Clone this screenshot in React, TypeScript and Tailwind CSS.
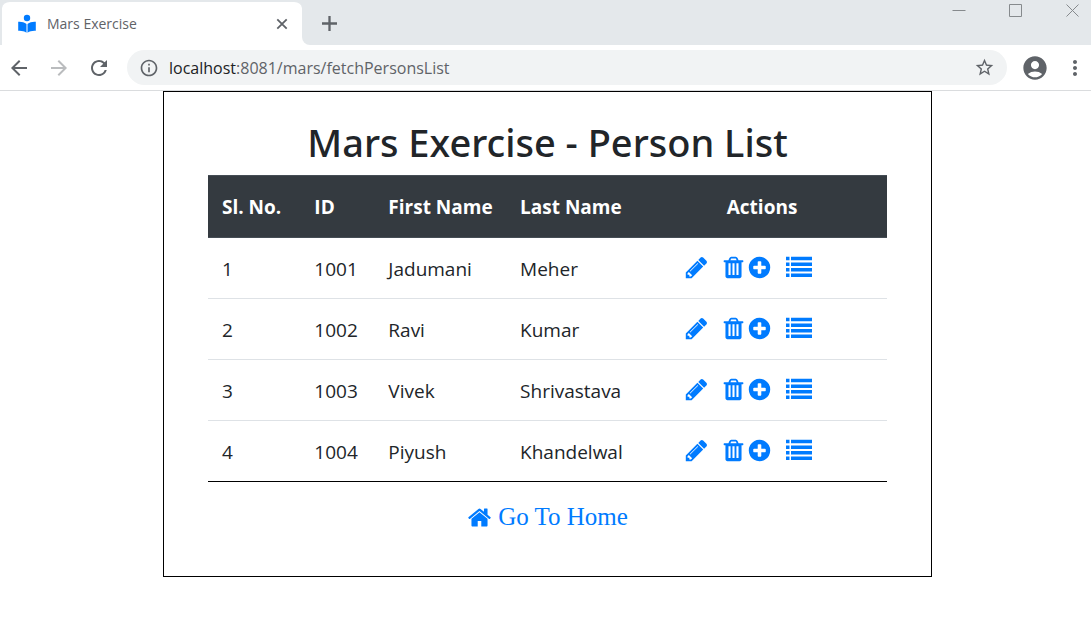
import type { ReactNode } from "react";
import { MdArrowBack, MdArrowForward, MdRefresh, MdInfoOutline, MdStarBorder, MdAccountCircle, MdMoreVert } from "react-icons/md";

type Person = { id: number; first: string; last: string };

const people: Person[] = [
  { id: 1001, first: "Jadumani", last: "Meher" },
  { id: 1002, first: "Ravi", last: "Kumar" },
  { id: 1003, first: "Vivek", last: "Shrivastava" },
  { id: 1004, first: "Piyush", last: "Khandelwal" },
];

const PENCIL =
  "M491 1536l91-91-235-235-91 91v107h128v128h107zm523-928q0-22-22-22-10 0-17 7l-542 542q-7 7-7 17 0 22 22 22 10 0 17-7l542-542q7-7 7-17zm-54-192l416 416-832 832h-416v-416zm683 96q0 53-37 90l-166 166-416-416 166-165q36-38 90-38 53 0 91 38l235 234q37 39 37 91z";
const TRASH =
  "M536 590v840h150v-840zM821 590v840h150v-840zM1106 590v840h150v-840zM672 384h448l-48-117q-7-9-17-11h-317q-10 2-17 11zm928 32v64q0 14-9 23t-23 9h-96v988q0 70-40 117t-100 47h-872q-60 0-100-45t-40-115v-992h-96q-14 0-23-9t-9-23v-64q0-14 9-23t23-9h309l70-167q15-37 54-63t79-26h320q40 0 79 26t54 63l70 167h309q14 0 23 9t9 23z";
const PLUS =
  "M1344 960v-128q0-26-19-45t-45-19h-256v-256q0-26-19-45t-45-19h-128q-26 0-45 19t-19 45v256h-256q-26 0-45 19t-19 45v128q0 26 19 45t45 19h256v256q0 26 19 45t45 19h128q26 0 45-19t19-45v-256h256q26 0 45-19t19-45zm320-64q0 209-103 385.5t-279.5 279.5-385.5 103-385.5-103-279.5-279.5-103-385.5 103-385.5 279.5-279.5 385.5-103 385.5 103 279.5 279.5 103 385.5z";
const HOME =
  "M1472 992v480q0 26-19 45t-45 19h-384v-384h-256v384h-384q-26 0-45-19t-19-45v-480q0-1 .5-3t.5-3l575-474 575 474q1 2 1 6zm223-69l-62 74q-8 9-21 11h-3q-13 0-21-7l-692-577-692 577q-12 8-24 7-13-2-21-11l-62-74q-8-10-7-23.5t11-21.5l719-599q32-26 76-26t76 26l244 204v-195q0-14 9-23t23-9h192q14 0 23 9t9 23v408l219 182q10 8 11 21.5t-7 23.5z";

function Glyph({ d }: { d: string }) {
  return (
    <svg viewBox="0 0 1792 1792" className="size-[25px] shrink-0" fill="currentColor" fillRule="evenodd" aria-hidden="true">
      <path d={d} />
    </svg>
  );
}

function ListGlyph() {
  return (
    <svg viewBox="0 0 26 26" className="size-[26px] shrink-0" fill="currentColor" aria-hidden="true">
      <path d="M0 2.800h3.500v3.500H0zM5 2.800h21v3.500H5zM0 8.500h3.500v3.500H0zM5 8.500h21v3.500H5zM0 14h3.500v3.500H0zM5 14h21v3.500H5zM0 19.600h3.500v3.500H0zM5 19.600h21v3.500H5z" />
    </svg>
  );
}

function ReaderLogo() {
  return (
    <svg viewBox="0 0 20 20" className="size-5 shrink-0 text-[#007bff]" fill="currentColor" aria-hidden="true">
      <circle cx="10" cy="4" r="3.200" />
      <path d="M1.200 7.800c3-.3 6 .4 8.300 2.200v8.700c-2.300-1.500-5.300-2.200-8.300-1.900zM18.800 7.800c-3-.3-6 .4-8.300 2.200v8.700c2.300-1.500 5.300-2.200 8.300-1.900z" />
    </svg>
  );
}

function ActionLink({ label, children }: { label: string; children: ReactNode }) {
  return (
    <a href="#" aria-label={label} className="flex text-[#007bff]">
      {children}
    </a>
  );
}

function BrowserChrome() {
  return (
    <header className="border-b border-[#dadcde] text-[#5f6368]">
      <div className="flex h-[45px] items-start bg-[#e4e8eb] pl-[2px]">
        <div className="flex h-[45px] w-[300px] items-center rounded-t-lg border-t-2 border-[#e4e8eb] bg-white pl-[15px] pr-3">
          <ReaderLogo />
          <span className="ml-[10px] flex-1 text-sm">Mars Exercise</span>
          <button aria-label="Close tab" className="flex">
            <svg viewBox="0 0 16 16" className="size-4" stroke="currentColor" strokeWidth="1.800" fill="none">
              <path d="M3.300 3.300l9.400 9.400M12.700 3.300l-9.400 9.400" />
            </svg>
          </button>
        </div>
        <div className="h-full bg-white">
          <div className="flex h-full items-center rounded-bl-lg bg-[#e4e8eb] pl-[15px]">
            <button aria-label="New tab" className="flex">
              <svg viewBox="0 0 24 24" className="size-6" stroke="currentColor" strokeWidth="2.300" fill="none">
                <path d="M12.500 5v15M5 12.500h15" />
              </svg>
            </button>
          </div>
        </div>
        <div className="ml-auto flex gap-[43px] pr-[11px] pt-1 text-[#868a8d]">
          <button aria-label="Minimize">
            <svg viewBox="0 0 14 14" className="size-[14px]" stroke="currentColor" fill="none">
              <path d="M.5 6.500H13.500" />
            </svg>
          </button>
          <button aria-label="Maximize">
            <svg viewBox="0 0 14 14" className="size-[14px]" stroke="currentColor" fill="none">
              <path d="M.5.5h12v12H.5z" />
            </svg>
          </button>
          <button aria-label="Close">
            <svg viewBox="0 0 14 14" className="size-[14px]" stroke="currentColor" fill="none">
              <path d="M.5.5l12 12M12.500.5l-12 12" />
            </svg>
          </button>
        </div>
      </div>
      <div className="flex h-[45px] items-center pl-[7px] pr-1">
        <button aria-label="Back" className="flex">
          <MdArrowBack className="size-6" />
        </button>
        <button aria-label="Forward" className="ml-4 flex text-[#babcbe]">
          <MdArrowForward className="size-6" />
        </button>
        <button aria-label="Reload" className="ml-4 flex">
          <MdRefresh className="size-6" />
        </button>
        <div className="ml-4 flex h-[35px] flex-1 items-center rounded-full bg-[#f1f3f4] pl-3 pr-3">
          <MdInfoOutline className="size-5 shrink-0" />
          <a href="#" className="ml-[10px] flex-1">
            <span className="text-[#202124]">localhost</span>:8081/mars/fetchPersonsList
          </a>
          <button aria-label="Bookmark this page" className="flex">
            <MdStarBorder className="size-[21px]" />
          </button>
        </div>
        <button aria-label="Profile" className="ml-[14px] flex">
          <MdAccountCircle className="size-7" />
        </button>
        <button aria-label="Menu" className="ml-[14px] flex">
          <MdMoreVert className="size-6" />
        </button>
      </div>
    </header>
  );
}

export default function App() {
  return (
    <div className="min-h-screen bg-white font-['Open_Sans',sans-serif] text-[#212529]">
      <BrowserChrome />
      <main className="grid grid-cols-[163fr_769fr_159fr]">
        <section className="col-start-2 border border-black px-11 pb-[41px] pt-[26px]">
          <h1 className="text-center font-['Noto_Sans',sans-serif] text-[38px] font-medium leading-[49px]">
            Mars Exercise - Person List
          </h1>
          <table className="mt-2 w-full table-fixed border-collapse border-b border-black text-left text-[19px] leading-7">
            <colgroup>
              <col className="w-[13.6%]" />
              <col className="w-[10.9%]" />
              <col className="w-[19.4%]" />
              <col className="w-[19.3%]" />
              <col />
            </colgroup>
            <thead className="bg-[#343a40] text-white">
              <tr className="h-[62px] whitespace-nowrap border-y border-[#454d55]">
                <th className="pl-[14px]">Sl. No.</th>
                <th className="pl-[14px]">ID</th>
                <th className="pl-[14px]">First Name</th>
                <th className="pl-[14px]">Last Name</th>
                <th className="text-center">Actions</th>
              </tr>
            </thead>
            <tbody>
              {people.map((p, i) => (
                <tr key={p.id} className="h-[61px] border-b border-[#dee2e6] last:border-black">
                  <td className="pl-[14px] pt-[2px]">{i + 1}</td>
                  <td className="pl-[14px] pt-[2px]">{p.id}</td>
                  <td className="pl-[14px] pt-[2px]">{p.first}</td>
                  <td className="pl-[14px] pt-[2px]">{p.last}</td>
                  <td className="pb-[2px] pl-[47px]">
                    <div className="flex items-center">
                      <ActionLink label="Edit">
                        <Glyph d={PENCIL} />
                      </ActionLink>
                      <span className="ml-3 flex gap-px">
                        <ActionLink label="Delete">
                          <Glyph d={TRASH} />
                        </ActionLink>
                        <ActionLink label="Add">
                          <Glyph d={PLUS} />
                        </ActionLink>
                      </span>
                      <span className="ml-[14px]">
                        <ActionLink label="Details">
                          <ListGlyph />
                        </ActionLink>
                      </span>
                    </div>
                  </td>
                </tr>
              ))}
            </tbody>
          </table>
          <a
            href="#"
            className="mx-auto mt-[17px] flex w-fit items-center gap-[6px] font-['Liberation_Serif',serif] text-[25px] leading-9 text-[#007bff]"
          >
            <Glyph d={HOME} />
            Go To Home
          </a>
        </section>
      </main>
    </div>
  );
}
